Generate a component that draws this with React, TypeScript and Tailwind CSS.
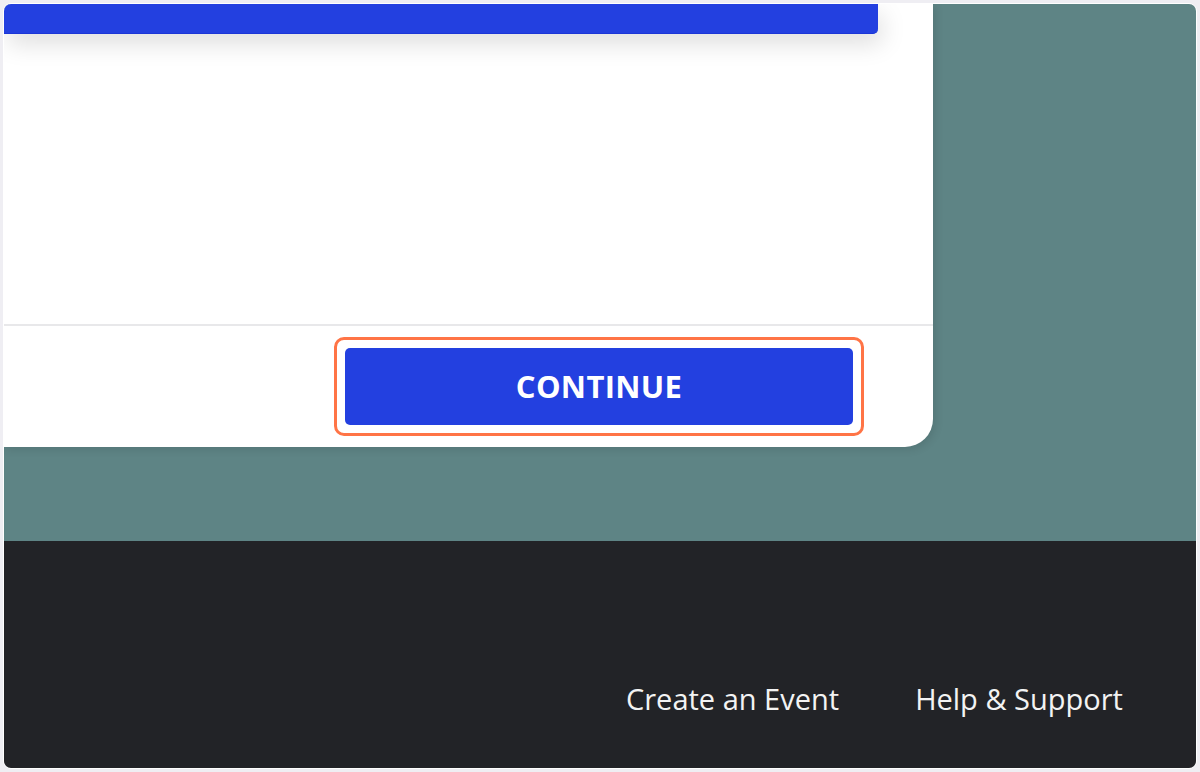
export default function App() {
  const links = ["Create an Event", "Help & Support"];

  return (
    <div className="h-[772px] w-[1200px] bg-[#efeef3] p-[3px] font-['Open_Sans',sans-serif]">
      <div className="flex h-full flex-col overflow-hidden rounded-[8px] border border-white">
        <main className="h-[537px] shrink-0 bg-[#5e8485] pr-[263px]">
          <section className="flex h-[443px] flex-col rounded-br-[28px] bg-white shadow-[2px_2px_10px_rgba(0,0,0,0.12)]">
            <div className="flex-1">
              <div className="h-[30px] w-[874px] rounded-br-[5px] border-b border-[#1b36d6] bg-[#2340e0] shadow-[4px_10px_24px_rgba(0,0,0,0.13)]" />
            </div>
            <div className="flex h-[123px] items-center justify-end border-t-2 border-[#e8e8ea] pr-[69px]">
              <div className="rounded-[10px] border-[3px] border-[#ff7446] p-[8px]">
                <button className="flex h-[77px] w-[508px] items-center justify-center rounded-[5px] bg-[#2340e0] text-[31px] font-bold tracking-[0.01em] text-white">
                  CONTINUE
                </button>
              </div>
            </div>
          </section>
        </main>
        <footer className="flex-1 bg-[#222327] pl-[622px] pt-[143px]">
          <nav className="flex gap-[76px] whitespace-nowrap text-[29px] leading-none text-[#f3f3f3]">
            {links.map((link) => (
              <a key={link} href="#">
                {link}
              </a>
            ))}
          </nav>
        </footer>
      </div>
    </div>
  );
}
